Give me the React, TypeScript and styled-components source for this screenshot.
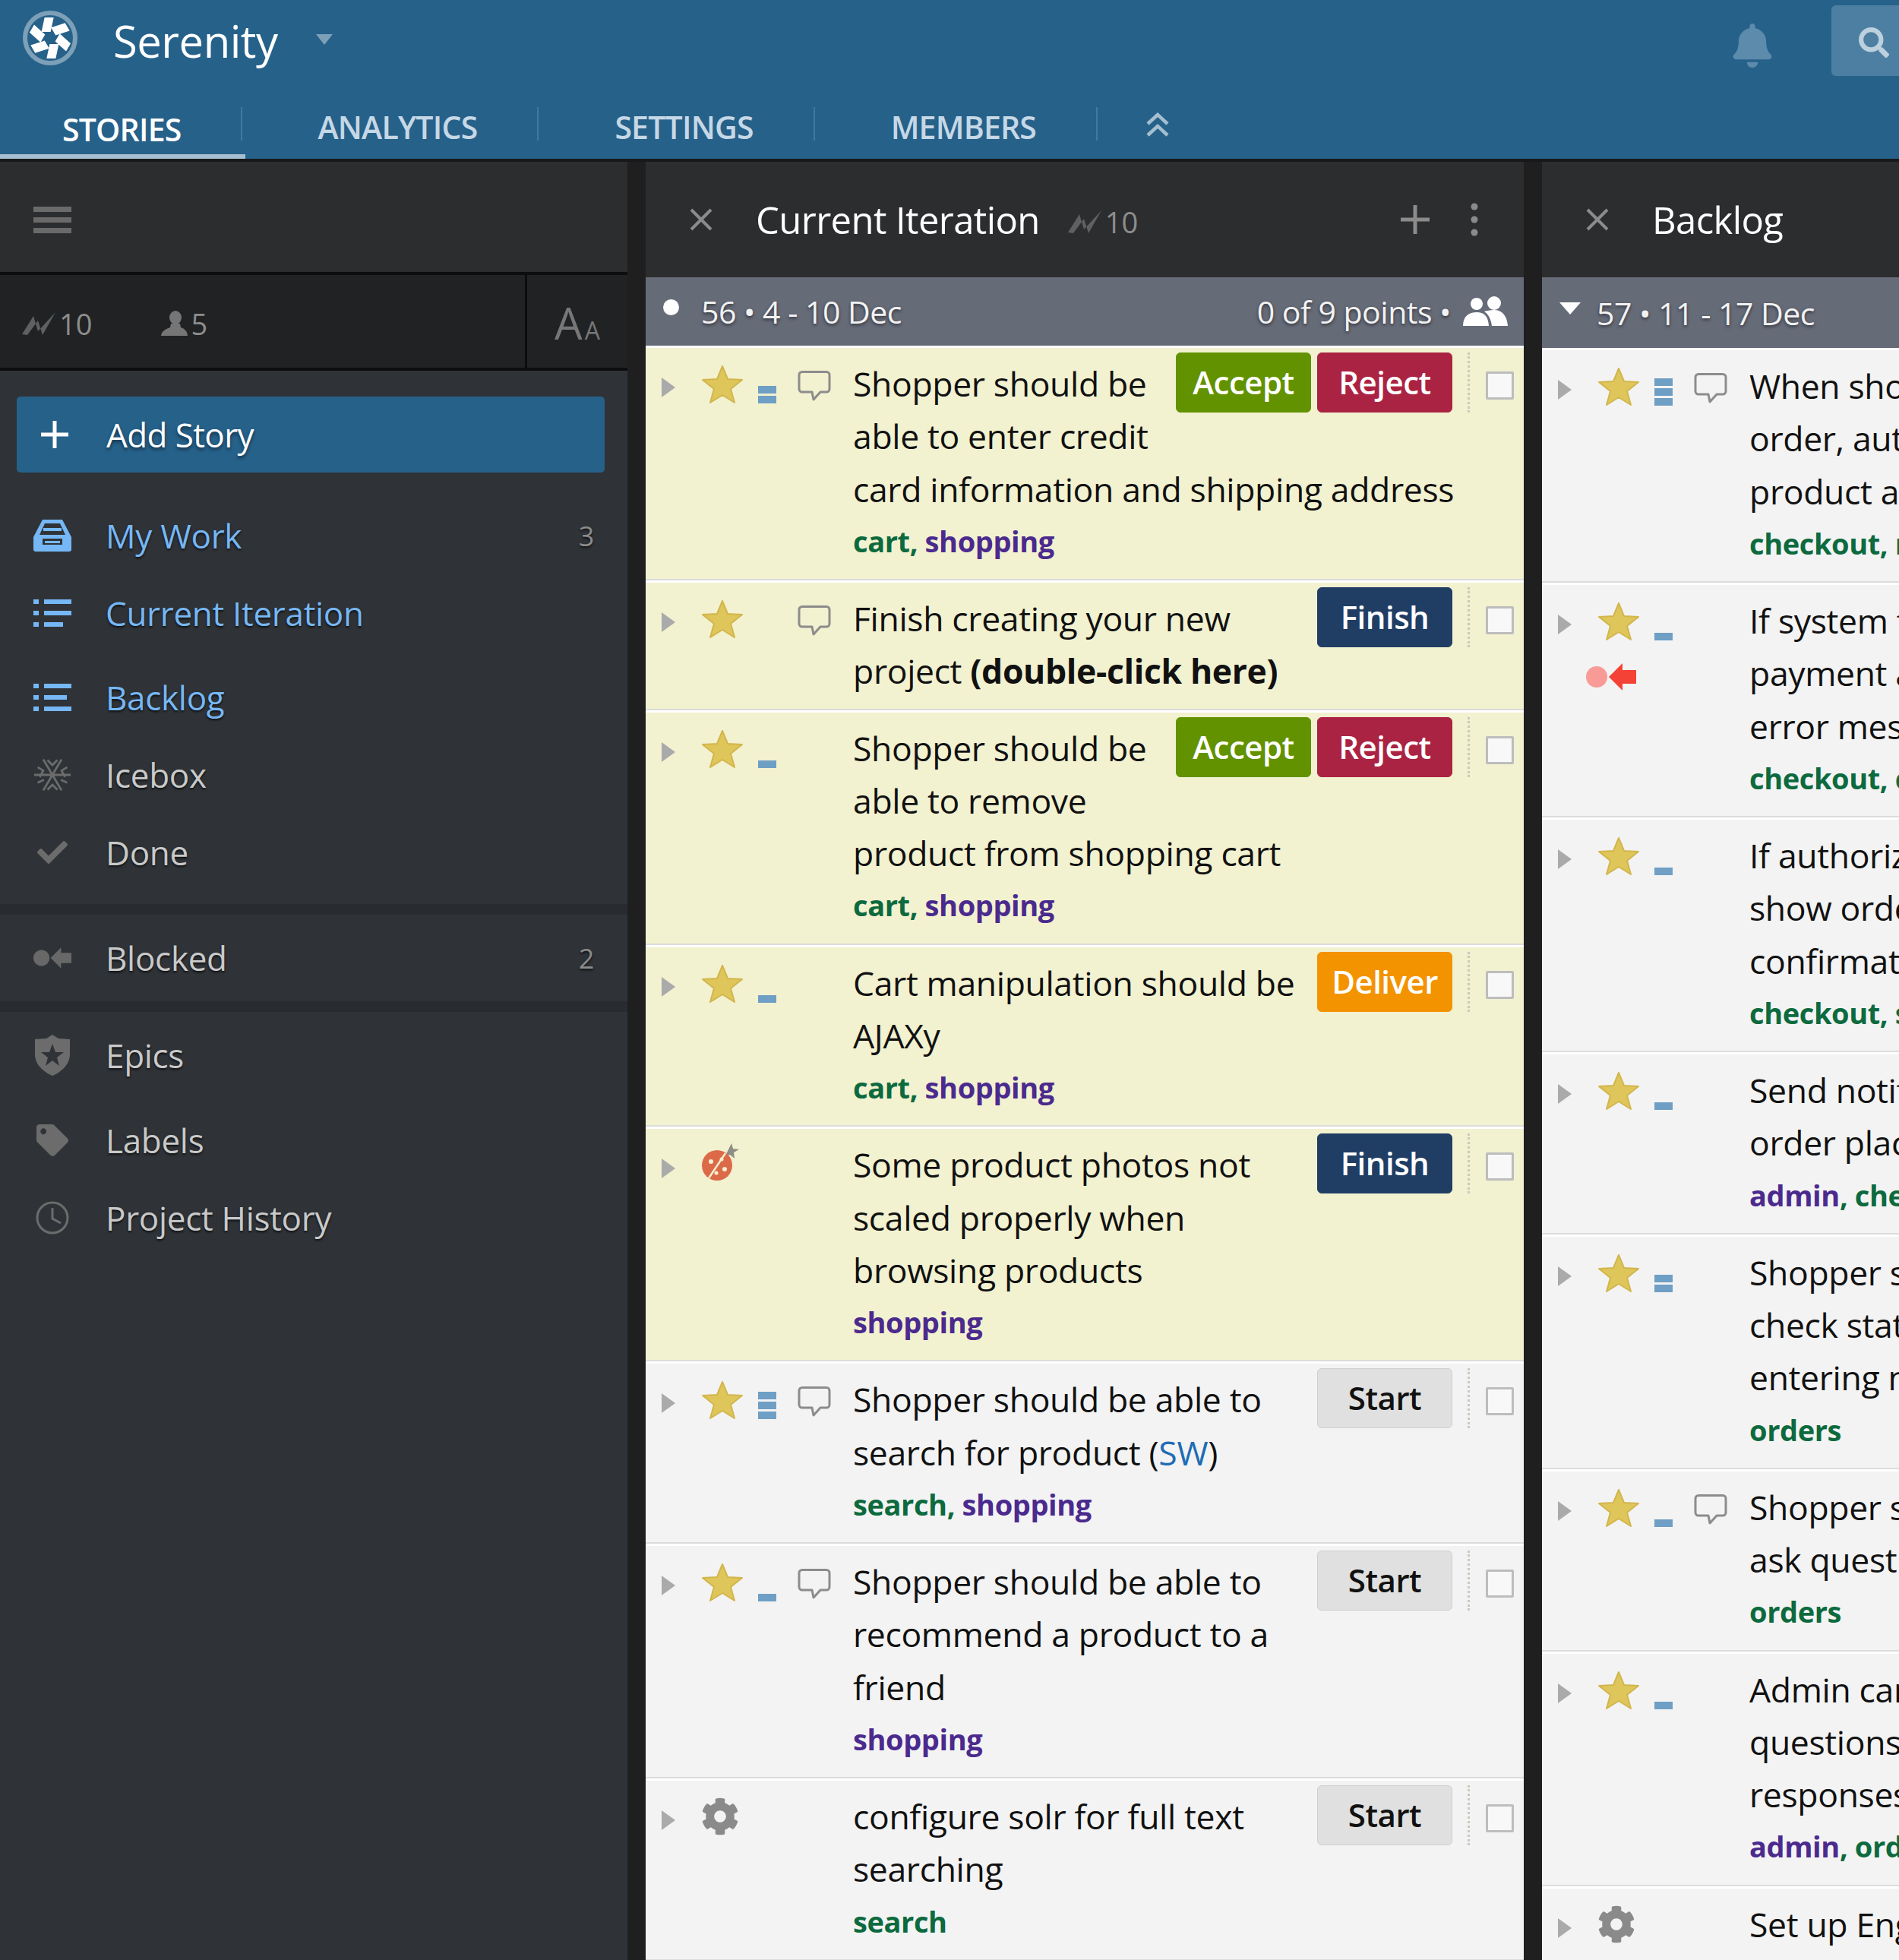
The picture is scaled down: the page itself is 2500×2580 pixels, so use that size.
import { ReactNode } from 'react';
import styled, { createGlobalStyle } from 'styled-components';
import { FaBell, FaCheck, FaCog, FaSearch, FaTag } from 'react-icons/fa';

const GlobalStyle = createGlobalStyle`
  html, body {
    margin: 0;
    padding: 0;
    background: #1f1f20;
  }
  * {
    box-sizing: border-box;
  }
`;

const Page = styled.div`
  width: 2500px;
  height: 2580px;
  overflow: hidden;
  font-family: 'Open Sans', 'Noto Sans', sans-serif;
  display: flex;
  flex-direction: column;
  background: #1f1f20;
`;

const TopBar = styled.header`
  height: 209px;
  flex: none;
  background: #26618a;
  display: flex;
  flex-direction: column;
`;

const BrandRow = styled.div`
  height: 106px;
  display: flex;
  align-items: flex-start;
  padding-left: 28px;
`;

const BrandName = styled.div`
  color: #fff;
  font-size: 58px;
  line-height: 108px;
  margin-left: 45px;
  letter-spacing: -0.5px;
`;

const BrandCaret = styled.div`
  width: 0;
  height: 0;
  margin: 45px 0 0 50px;
  border-left: 11px solid transparent;
  border-right: 11px solid transparent;
  border-top: 14px solid #7da0b8;
`;

const BellSlot = styled.div`
  margin: 25px 0 0 auto;
  color: #5d8bac;
  font-size: 60px;
  height: 60px;
`;

const SearchBox = styled.div`
  width: 89px;
  height: 93px;
  margin: 7px 0 0 75px;
  background: #4d7fa2;
  border-radius: 6px 0 0 6px;
  color: #bcd0de;
  font-size: 40px;
  padding: 26px 0 0 36px;
`;

const TabRow = styled.nav`
  height: 103px;
  display: flex;
  align-items: flex-start;
`;

const Tab = styled.div<{ $active?: boolean }>`
  position: relative;
  height: 103px;
  padding: ${(p) => (p.$active ? '36px 80px 0 82px' : '33px 81px 0 100px')};
  font-size: 41px;
  font-weight: 600;
  line-height: 56px;
  letter-spacing: -0.8px;
  color: ${(p) => (p.$active ? '#fff' : '#c6d8e6')};

  &::after {
    content: '';
    position: absolute;
    right: 0;
    top: 35px;
    height: 44px;
    width: 2px;
    background: #3f7aa1;
  }

  &::before {
    content: '';
    display: ${(p) => (p.$active ? 'block' : 'none')};
    position: absolute;
    left: 0;
    right: -4px;
    bottom: 0;
    height: 6px;
    background: #a5bfd0;
  }
`;

const CollapseTabs = styled.div`
  margin: 42px 0 0 64px;
  color: #a5bfd0;
  height: 40px;
`;

const Board = styled.main`
  flex: 1;
  min-height: 0;
  display: flex;
  border-top: 4px solid #17181a;
`;

const Sidebar = styled.aside`
  width: 826px;
  flex: none;
  background: #2f3337;
  display: flex;
  flex-direction: column;
`;

const SidebarTop = styled.div`
  height: 149px;
  flex: none;
  background: #2c2d2f;
  padding: 59px 0 0 44px;
  border-bottom: 4px solid #0d0d0e;
`;

const Hamburger = styled.div`
  width: 50px;
  height: 35px;
  display: flex;
  flex-direction: column;
  justify-content: space-between;

  span {
    height: 7px;
    background: #6a6a6a;
  }
`;

const StatsRow = styled.div`
  height: 126px;
  flex: none;
  display: flex;
  background: #212224;
  border-bottom: 4px solid #0d0d0e;
`;

const StatsLeft = styled.div`
  width: 694px;
  border-right: 3px solid #0d0d0e;
  display: flex;
  align-items: center;
  padding: 6px 0 0 28px;
`;

const Stat = styled.div<{ $gap?: number }>`
  display: flex;
  align-items: center;
  color: #8d8d8d;
  font-size: 38px;
  margin-left: ${(p) => p.$gap ?? 0}px;
  gap: 4px;
`;

const TextSize = styled.div`
  flex: 1;
  color: #777;
  padding-left: 36px;
  display: flex;
  align-items: baseline;
  font-size: 58px;
  line-height: 126px;

  small {
    font-size: 32px;
    margin-left: 3px;
  }
`;

const AddStory = styled.div`
  height: 100px;
  margin: 34px 30px 32px 22px;
  border-radius: 5px;
  background: #26618a;
  color: #fff;
  font-size: 44px;
  display: flex;
  align-items: center;
  padding-left: 32px;
  gap: 50px;
  letter-spacing: -0.6px;
  text-shadow: 0 3px 4px rgba(0, 0, 0, 0.5);
`;

const NavGroup = styled.div<{ $band?: boolean }>`
  ${(p) => p.$band && 'border-top: 14px solid #282b2f; border-bottom: 14px solid #282b2f; margin: 17px 0 0;'}
  ${(p) => p.$band && 'padding: 6px 0;'}
`;

const NavItem = styled.div<{ $active?: boolean; $top?: number }>`
  height: 102px;
  margin-top: ${(p) => p.$top ?? 0}px;
  display: flex;
  align-items: center;
  padding: 0 44px;
  font-size: 44px;
  color: ${(p) => (p.$active ? '#76b7f5' : '#c9c9c9')};
  text-shadow: 0 2px 3px rgba(0, 0, 0, 0.7);
  letter-spacing: -0.3px;
`;

const NavIcon = styled.div<{ $active?: boolean }>`
  width: 50px;
  height: 50px;
  margin-right: 45px;
  display: flex;
  align-items: center;
  justify-content: center;
  color: ${(p) => (p.$active ? '#76b7f5' : '#6c6c6c')};
  flex: none;
`;

const NavCount = styled.span`
  margin-left: auto;
  font-size: 36px;
  color: #8b8b8b;
`;

const Gutter = styled.div`
  width: 24px;
  flex: none;
  background: #1f1f20;
`;

const Column = styled.section`
  width: 1156px;
  flex: none;
  display: flex;
  flex-direction: column;
  background: #f3f3f3;
  overflow: hidden;
`;

const ColumnHeader = styled.div`
  height: 152px;
  flex: none;
  background: #2c2d2f;
  display: flex;
  align-items: center;
  color: #fff;
  padding-left: 58px;
`;

const CloseMark = styled.div`
  width: 30px;
  height: 30px;
  color: #8b8b8b;
  margin-right: 57px;
  display: flex;
`;

const ColumnTitle = styled.div`
  font-size: 49px;
  letter-spacing: -0.6px;
`;

const ColumnPoints = styled.div`
  margin-left: 36px;
  display: flex;
  align-items: center;
  gap: 4px;
  color: #8d8d8d;
  font-size: 38px;
  padding-top: 6px;
`;

const HeaderActions = styled.div`
  margin-left: auto;
  display: flex;
  align-items: center;
  color: #8b8b8b;
  gap: 54px;
  padding-right: 60px;
`;

const IterationBar = styled.div<{ $tall?: boolean }>`
  height: ${(p) => (p.$tall ? 93 : 90)}px;
  flex: none;
  background: #666b78;
  color: #f2f2f2;
  font-size: 41px;
  display: flex;
  align-items: center;
  padding: 0 20px 0 20px;
  letter-spacing: -0.5px;
  text-shadow: 0 2px 4px rgba(0, 0, 0, 0.55);
`;

const IterationDot = styled.div`
  width: 21px;
  height: 21px;
  border-radius: 50%;
  background: #fff;
  margin: -12px 29px 0 3px;
`;

const IterationCaret = styled.div`
  width: 0;
  height: 0;
  margin: -12px 21px 0 3px;
  border-left: 14px solid transparent;
  border-right: 14px solid transparent;
  border-top: 16px solid #fff;
`;

const IterationMeta = styled.div`
  margin-left: auto;
  display: flex;
  align-items: center;
  gap: 14px;
`;

const Row = styled.article<{ $yellow?: boolean }>`
  flex: none;
  display: flex;
  padding: 12px 11px 15px 21px;
  border-top: 3px solid #fff;
  border-bottom: 2px solid #dcdcdc;
  background: ${(p) => (p.$yellow ? '#f2f1d0' : '#f3f3f3')};
`;

const IconCell = styled.div`
  width: 252px;
  flex: none;
`;

const IconLine = styled.div`
  display: flex;
  align-items: flex-start;
`;

const Expander = styled.div`
  width: 0;
  height: 0;
  margin-top: 27px;
  border-top: 13px solid transparent;
  border-bottom: 13px solid transparent;
  border-left: 18px solid #aaa;
`;

const TypeSlot = styled.div`
  width: 75px;
  margin-left: 34px;
  margin-top: 10px;
  flex: none;
`;

const EstimateSlot = styled.div`
  width: 52px;
  height: 50px;
  margin-top: 11px;
  flex: none;
  display: flex;
  flex-direction: column;
  justify-content: flex-end;
  gap: 3px;
`;

const EstimateBar = styled.div`
  width: 24px;
  height: 10px;
  background: #6f9fc4;
`;

const CommentSlot = styled.div`
  margin-top: 18px;
  flex: none;
`;

const BlockerLine = styled.div`
  margin: 24px 0 0 37px;
  display: flex;
`;

const RowBody = styled.div`
  flex: 1;
  min-width: 0;
  font-size: 44.5px;
  line-height: 69.25px;
  color: #111;
  letter-spacing: -0.35px;

  strong {
    font-weight: 700;
  }
`;

const RowControls = styled.div`
  float: right;
  display: flex;
  align-items: flex-start;
  margin-top: -6px;
  margin-left: 12px;
`;

const ActionButton = styled.div<{ $bg: string; $fg?: string; $border?: string }>`
  width: 178px;
  height: 79px;
  margin-left: 8px;
  border-radius: 6px;
  background: ${(p) => p.$bg};
  color: ${(p) => p.$fg ?? '#fff'};
  border: 1px solid ${(p) => p.$border ?? p.$bg};
  font-size: 42px;
  font-weight: 600;
  line-height: 76px;
  text-align: center;
  letter-spacing: -0.5px;
`;

const DottedRule = styled.div`
  height: 79px;
  margin-left: 20px;
  border-left: 3px dotted #c9c9c0;
`;

const Checkbox = styled.div`
  width: 37px;
  height: 37px;
  margin: 25px 2px 0 21px;
  background: #f8f8f8;
  border: 3px solid #bdbdbd;
  border-radius: 2px;
`;

const Labels = styled.div`
  font-size: 38px;
  font-weight: 700;
  letter-spacing: -0.4px;
  white-space: nowrap;
`;

const LabelText = styled.span<{ $epic?: boolean }>`
  color: ${(p) => (p.$epic ? '#4b2a8e' : '#0c6a3e')};
`;

const Mention = styled.span`
  color: #1e6cb4;
`;

const Velocity = ({ size = 46 }: { size?: number }) => (
  <svg width={size} height={size * 0.7} viewBox="0 0 46 32">
    <path d="M1 30 L16 6 L22 26 L45 1 L28 31 L22 12 L8 31 Z" fill="#5f6062" />
  </svg>
);

const Person = () => (
  <svg width="36" height="34" viewBox="0 0 36 34">
    <ellipse cx="20" cy="9" rx="8" ry="9" fill="#767676" />
    <path d="M14 17 h12 l1 5 c5 2 8 4 9 11 H1 c1-7 7-9 12-11 Z" fill="#767676" />
  </svg>
);

const People = () => (
  <svg width="62" height="42" viewBox="0 0 62 42">
    <circle cx="20" cy="11" r="8" fill="#fff" />
    <path d="M2 40 c0-13 8-18 18-18 s15 5 16 18 Z" fill="#fff" />
    <circle cx="43" cy="10" r="9" fill="#fff" />
    <path d="M30 21 c3-1 8-2 13-2 c10 0 17 7 18 21 H40 c-1-8-4-15-10-19 Z" fill="#fff" />
  </svg>
);

const Star = () => (
  <svg width="56" height="52" viewBox="0 0 56 52">
    <path
      d="M28 2 L35 19 L54 20 L39 32 L44 50 L28 40 L12 50 L17 32 L2 20 L21 19 Z"
      fill="#dfc65b"
      stroke="#d2b64c"
      strokeWidth="2"
      strokeLinejoin="round"
    />
  </svg>
);

const Comment = () => (
  <svg width="44" height="40" viewBox="0 0 44 40">
    <path
      d="M6 1.5 H38 a4 4 0 0 1 4 4 V24 a4 4 0 0 1-4 4 H30 L21 38 L19 28 H6 a4 4 0 0 1-4-4 V5.5 a4 4 0 0 1 4-4 Z"
      fill="none"
      stroke="#8c8c8c"
      strokeWidth="3"
      strokeLinejoin="round"
    />
  </svg>
);

const Ladybug = () => (
  <svg width="52" height="52" viewBox="0 0 52 52" style={{ marginTop: -4 }}>
    <path d="M40 1 L42 8 L50 9 L43 13 L44 21 L38 16 L32 18 L35 11 Z" fill="#8d8d85" />
    <circle cx="21" cy="30" r="20" fill="#dc6a48" />
    <path d="M32 14 L10 47" stroke="#f2f1d0" strokeWidth="2.5" />
    <circle cx="13" cy="25" r="3" fill="#f2f1d0" />
    <circle cx="27" cy="22" r="2.5" fill="#f2f1d0" />
    <circle cx="31" cy="35" r="3" fill="#f2f1d0" />
    <circle cx="20" cy="40" r="2.5" fill="#f2f1d0" />
  </svg>
);

const Blocker = ({ dim }: { dim?: boolean }) => (
  <svg width="66" height="36" viewBox="0 0 66 36">
    <circle cx="14" cy="18" r="14" fill={dim ? '#686868' : '#f89b96'} />
    <path d="M30 18 L48 0 V9 H66 V27 H48 V36 Z" fill={dim ? '#686868' : '#f44336'} />
  </svg>
);

const Logo = () => (
  <svg width="76" height="76" viewBox="0 0 76 76" style={{ marginTop: 12 }}>
    <circle cx="38" cy="38" r="33" fill="none" stroke="#7da0b8" strokeWidth="6" />
    {[0, 60, 120, 180, 240, 300].map((a) => (
      <rect key={a} x="33" y="11" width="12" height="19" fill="#fff" transform={`rotate(${a} 38 38) skewX(-12)`} />
    ))}
  </svg>
);

const Tray = () => (
  <svg width="50" height="44" viewBox="0 0 50 44">
    <path
      fillRule="evenodd"
      d="M12 1 H38 L50 24 V40 a3 3 0 0 1-3 3 H3 a3 3 0 0 1-3-3 V24 Z M15 6 L8 21 H42 L35 6 Z M12 26 V34 H38 V26 Z"
      fill="#76b7f5"
    />
    <rect x="13" y="12" width="24" height="4" fill="#76b7f5" />
    <rect x="15" y="29" width="20" height="3" fill="#76b7f5" />
  </svg>
);

const ListIcon = ({ short }: { short?: boolean }) => (
  <svg width="50" height="36" viewBox="0 0 50 36">
    <rect x="0" y="0" width="7" height="6" fill="#76b7f5" />
    <rect x="0" y="15" width="7" height="6" fill="#76b7f5" />
    <rect x="0" y="30" width="7" height="6" fill="#76b7f5" />
    <rect x="14" y="0" width="36" height="6" fill="#76b7f5" />
    <rect x="14" y="15" width={short ? 30 : 36} height="6" fill="#76b7f5" />
    <rect x="14" y="30" width={short ? 36 : 25} height="6" fill="#76b7f5" />
  </svg>
);

const Snowflake = () => (
  <svg width="54" height="48" viewBox="0 0 54 48" fill="none" stroke="#6c6c6c" strokeWidth="3">
    <path d="M1 24 H53 M14 2 L40 46 M40 2 L14 46" />
    <path d="M20 3 L27 10 L34 3 M20 45 L27 38 L34 45 M6 13 L14 18 L9 27 M48 13 L40 18 L45 27 M6 35 L15 31 M48 35 L39 31" />
  </svg>
);

const Shield = () => (
  <svg width="48" height="54" viewBox="0 0 48 54">
    <path d="M24 0 L32 5 L47 6 V26 C47 40 34 50 24 54 C14 50 1 40 1 26 V6 L16 5 Z" fill="#6c6c6c" />
    <path d="M24 12 L28 23 L39 23 L30 30 L33 41 L24 34 L15 41 L18 30 L9 23 L20 23 Z" fill="#2f3337" />
  </svg>
);

const Clock = () => (
  <svg width="44" height="44" viewBox="0 0 44 44" fill="none" stroke="#6c6c6c" strokeWidth="3">
    <circle cx="22" cy="22" r="20" />
    <path d="M22 9 V23 L33 29" />
  </svg>
);

const Cross = () => (
  <svg width="30" height="30" viewBox="0 0 30 30" stroke="currentColor" strokeWidth="4">
    <path d="M2 2 L28 28 M28 2 L2 28" />
  </svg>
);

const Plus = ({ size, color = 'currentColor', weight = 5 }: { size: number; color?: string; weight?: number }) => (
  <svg width={size} height={size} viewBox={`0 0 ${size} ${size}`} stroke={color} strokeWidth={weight}>
    <path d={`M${size / 2} 0 V${size} M0 ${size / 2} H${size}`} />
  </svg>
);

const Dots = () => (
  <svg width="10" height="44" viewBox="0 0 10 44" fill="currentColor">
    <circle cx="5" cy="5" r="4.5" />
    <circle cx="5" cy="22" r="4.5" />
    <circle cx="5" cy="39" r="4.5" />
  </svg>
);

const DoubleUp = () => (
  <svg width="30" height="32" viewBox="0 0 30 32" fill="none" stroke="currentColor" strokeWidth="4.5">
    <path d="M2 15 L15 3 L28 15 M2 30 L15 18 L28 30" />
  </svg>
);

type Kind = 'feature' | 'bug' | 'chore';
type Action = 'Accept' | 'Reject' | 'Deliver' | 'Finish' | 'Start';

interface Story {
  kind: Kind;
  points?: number;
  comment?: boolean;
  blocked?: boolean;
  yellow?: boolean;
  title: ReactNode;
  labels?: [string, boolean][];
  actions?: Action[];
}

const buttonStyles: Record<Action, { bg: string; fg?: string; border?: string }> = {
  Accept: { bg: '#629200' },
  Reject: { bg: '#ab2342' },
  Deliver: { bg: '#f39300' },
  Finish: { bg: '#203e64' },
  Start: { bg: '#e0e0e0', fg: '#111', border: '#cfcfcf' },
};

const currentStories: Story[] = [
  {
    kind: 'feature',
    points: 2,
    comment: true,
    yellow: true,
    title: 'Shopper should be able to enter credit card information and shipping address',
    labels: [['cart', false], ['shopping', true]],
    actions: ['Accept', 'Reject'],
  },
  {
    kind: 'feature',
    comment: true,
    yellow: true,
    title: (
      <>
        Finish creating your new project <strong>(double-click here)</strong>
      </>
    ),
    actions: ['Finish'],
  },
  {
    kind: 'feature',
    points: 1,
    yellow: true,
    title: 'Shopper should be able to remove product from shopping cart',
    labels: [['cart', false], ['shopping', true]],
    actions: ['Accept', 'Reject'],
  },
  {
    kind: 'feature',
    points: 1,
    yellow: true,
    title: 'Cart manipulation should be AJAXy',
    labels: [['cart', false], ['shopping', true]],
    actions: ['Deliver'],
  },
  {
    kind: 'bug',
    yellow: true,
    title: 'Some product photos not scaled properly when browsing products',
    labels: [['shopping', true]],
    actions: ['Finish'],
  },
  {
    kind: 'feature',
    points: 3,
    comment: true,
    title: (
      <>
        Shopper should be able to search for product (<Mention>SW</Mention>)
      </>
    ),
    labels: [['search', false], ['shopping', true]],
    actions: ['Start'],
  },
  {
    kind: 'feature',
    points: 1,
    comment: true,
    title: 'Shopper should be able to recommend a product to a friend',
    labels: [['shopping', true]],
    actions: ['Start'],
  },
  {
    kind: 'chore',
    title: 'configure solr for full text searching',
    labels: [['search', false]],
    actions: ['Start'],
  },
];

const lines = (...text: string[]) =>
  text.map((t, i) => (
    <span key={i}>
      {t}
      <br />
    </span>
  ));

const backlogStories: Story[] = [
  {
    kind: 'feature',
    points: 3,
    comment: true,
    title: lines('When shopper places', 'order, automatically', 'product availability'),
    labels: [['checkout, reports', false]],
    actions: ['Start'],
  },
  {
    kind: 'feature',
    points: 1,
    blocked: true,
    title: lines('If system fails', 'payment authorization', 'error message'),
    labels: [['checkout, cart', false]],
    actions: ['Start'],
  },
  {
    kind: 'feature',
    points: 1,
    title: lines('If authorization', 'show order', 'confirmation'),
    labels: [['checkout, shopping', false]],
    actions: ['Start'],
  },
  {
    kind: 'feature',
    points: 1,
    title: lines('Send notification', 'order placed'),
    labels: [['admin', true], ['checkout', false]],
    actions: ['Start'],
  },
  {
    kind: 'feature',
    points: 2,
    title: lines('Shopper should', 'check status', 'entering number'),
    labels: [['orders', false]],
    actions: ['Start'],
  },
  {
    kind: 'feature',
    points: 1,
    comment: true,
    title: lines('Shopper should', 'ask questions'),
    labels: [['orders', false]],
    actions: ['Start'],
  },
  {
    kind: 'feature',
    points: 1,
    title: lines('Admin can', 'questions', 'responses'),
    labels: [['admin', true], ['orders', false]],
    actions: ['Start'],
  },
  {
    kind: 'chore',
    title: lines('Set up Engine'),
    labels: [['admin', true]],
    actions: ['Start'],
  },
];

function StoryRow({ story }: { story: Story }) {
  return (
    <Row $yellow={story.yellow}>
      <IconCell>
        <IconLine>
          <Expander />
          <TypeSlot>
            {story.kind === 'feature' && <Star />}
            {story.kind === 'bug' && <Ladybug />}
            {story.kind === 'chore' && <FaCog size={50} color="#8a8a8a" />}
          </TypeSlot>
          <EstimateSlot>
            {Array.from({ length: story.points ?? 0 }).map((_, i) => (
              <EstimateBar key={i} />
            ))}
          </EstimateSlot>
          <CommentSlot>{story.comment && <Comment />}</CommentSlot>
        </IconLine>
        {story.blocked && (
          <BlockerLine>
            <Blocker />
          </BlockerLine>
        )}
      </IconCell>
      <RowBody>
        <RowControls>
          {story.actions?.map((a) => (
            <ActionButton key={a} {...Object.fromEntries(Object.entries(buttonStyles[a]).map(([k, v]) => [`$${k}`, v]))} $bg={buttonStyles[a].bg}>
              {a}
            </ActionButton>
          ))}
          <DottedRule />
          <Checkbox />
        </RowControls>
        {story.title}
        {story.labels && (
          <Labels>
            {story.labels.map(([name, epic], i) => (
              <span key={name}>
                <LabelText $epic={epic}>{name}</LabelText>
                {i < story.labels!.length - 1 && <LabelText>, </LabelText>}
              </span>
            ))}
          </Labels>
        )}
      </RowBody>
    </Row>
  );
}

export default function App() {
  return (
    <Page>
      <GlobalStyle />
      <TopBar>
        <BrandRow>
          <Logo />
          <BrandName>Serenity</BrandName>
          <BrandCaret />
          <BellSlot>
            <FaBell size={58} />
          </BellSlot>
          <SearchBox>
            <FaSearch size={40} />
          </SearchBox>
        </BrandRow>
        <TabRow>
          <Tab $active>STORIES</Tab>
          <Tab>ANALYTICS</Tab>
          <Tab>SETTINGS</Tab>
          <Tab>MEMBERS</Tab>
          <CollapseTabs>
            <DoubleUp />
          </CollapseTabs>
        </TabRow>
      </TopBar>
      <Board>
        <Sidebar>
          <SidebarTop>
            <Hamburger>
              <span />
              <span />
              <span />
            </Hamburger>
          </SidebarTop>
          <StatsRow>
            <StatsLeft>
              <Stat>
                <Velocity />
                10
              </Stat>
              <Stat $gap={90}>
                <Person />
                5
              </Stat>
            </StatsLeft>
            <TextSize>
              A<small>A</small>
            </TextSize>
          </StatsRow>
          <AddStory>
            <Plus size={36} />
            Add Story
          </AddStory>
          <NavItem $active>
            <NavIcon $active>
              <Tray />
            </NavIcon>
            My Work
            <NavCount>3</NavCount>
          </NavItem>
          <NavItem $active>
            <NavIcon $active>
              <ListIcon />
            </NavIcon>
            Current Iteration
          </NavItem>
          <NavItem $active $top={9}>
            <NavIcon $active>
              <ListIcon short />
            </NavIcon>
            Backlog
          </NavItem>
          <NavItem>
            <NavIcon>
              <Snowflake />
            </NavIcon>
            Icebox
          </NavItem>
          <NavItem>
            <NavIcon>
              <FaCheck size={40} />
            </NavIcon>
            Done
          </NavItem>
          <NavGroup $band>
            <NavItem>
              <NavIcon>
                <Blocker dim />
              </NavIcon>
              Blocked
              <NavCount>2</NavCount>
            </NavItem>
          </NavGroup>
          <NavItem $top={6}>
            <NavIcon>
              <Shield />
            </NavIcon>
            Epics
          </NavItem>
          <NavItem $top={10}>
            <NavIcon>
              <FaTag size={42} style={{ transform: 'scaleX(1)' }} />
            </NavIcon>
            Labels
          </NavItem>
          <NavItem>
            <NavIcon>
              <Clock />
            </NavIcon>
            Project History
          </NavItem>
        </Sidebar>
        <Gutter />
        <Column>
          <ColumnHeader>
            <CloseMark>
              <Cross />
            </CloseMark>
            <ColumnTitle>Current Iteration</ColumnTitle>
            <ColumnPoints>
              <Velocity />
              10
            </ColumnPoints>
            <HeaderActions>
              <Plus size={38} weight={5} />
              <Dots />
            </HeaderActions>
          </ColumnHeader>
          <IterationBar>
            <IterationDot />
            56 • 4 - 10 Dec
            <IterationMeta>
              0 of 9 points • <People />
            </IterationMeta>
          </IterationBar>
          {currentStories.map((s, i) => (
            <StoryRow key={i} story={s} />
          ))}
        </Column>
        <Gutter />
        <Column>
          <ColumnHeader>
            <CloseMark>
              <Cross />
            </CloseMark>
            <ColumnTitle>Backlog</ColumnTitle>
          </ColumnHeader>
          <IterationBar $tall>
            <IterationCaret />
            57 • 11 - 17 Dec
          </IterationBar>
          {backlogStories.map((s, i) => (
            <StoryRow key={i} story={s} />
          ))}
        </Column>
      </Board>
    </Page>
  );
}
